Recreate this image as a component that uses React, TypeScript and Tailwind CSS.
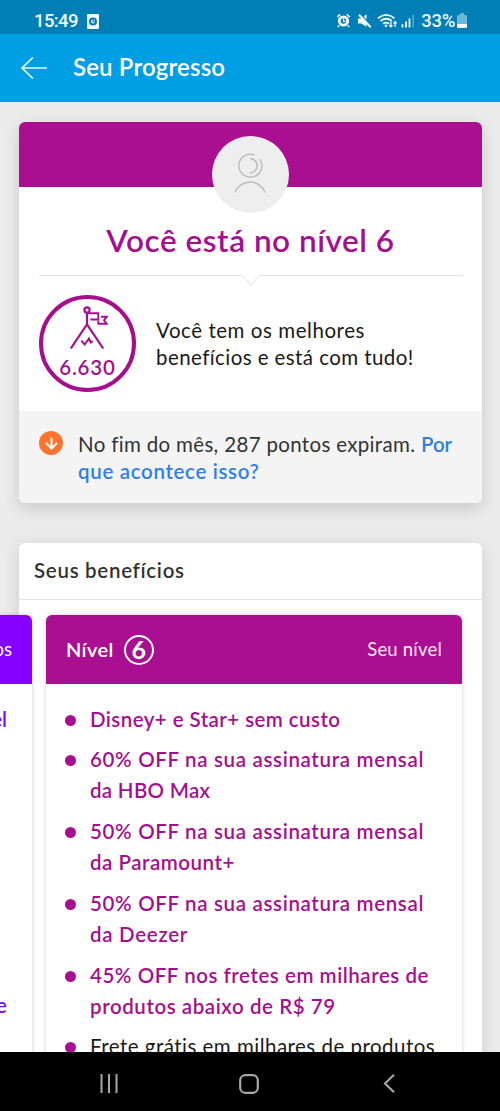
import React from 'react';
import { ArrowDown } from 'lucide-react';

type Benefit = {
    lines: { text: string; tracking: string }[];
    highlight: boolean;
};

const benefits: Benefit[] = [
    { lines: [{ text: 'Disney+ e Star+ sem custo', tracking: 'tracking-[0.43px]' }], highlight: true },
    {
        lines: [
            { text: '60% OFF na sua assinatura mensal', tracking: 'tracking-[0.66px]' },
            { text: 'da HBO Max', tracking: 'tracking-[0.3px]' },
        ],
        highlight: true,
    },
    {
        lines: [
            { text: '50% OFF na sua assinatura mensal', tracking: 'tracking-[0.66px]' },
            { text: 'da Paramount+', tracking: 'tracking-[0.52px]' },
        ],
        highlight: true,
    },
    {
        lines: [
            { text: '50% OFF na sua assinatura mensal', tracking: 'tracking-[0.66px]' },
            { text: 'da Deezer', tracking: 'tracking-[0.7px]' },
        ],
        highlight: true,
    },
    {
        lines: [
            { text: '45% OFF nos fretes em milhares de', tracking: 'tracking-[0.54px]' },
            { text: 'produtos abaixo de R$ 79', tracking: 'tracking-[0.57px]' },
        ],
        highlight: true,
    },
    { lines: [{ text: 'Frete grátis em milhares de produtos', tracking: 'tracking-[0.48px]' }], highlight: false },
];

const StatusBar = () => (
    <div className="h-[34px] shrink-0 bg-[#007fb7] flex items-center justify-between pl-[34px] pr-[33px] pt-2 text-[#f0faff] font-[Roboto,sans-serif]">
        <div className="flex items-center gap-[9px]">
            <span className="text-[18.5px] leading-none font-medium tracking-[-0.6px]">15:49</span>
            <svg width="12" height="15" viewBox="0 0 12 15">
                <rect width="12" height="15" rx="1" fill="currentColor" />
                <circle cx="6" cy="7.5" r="3" fill="none" stroke="#007fb7" strokeWidth="2" />
                <path d="M6 5.5v2.2h1.8" fill="none" stroke="#007fb7" strokeWidth="1.1" />
            </svg>
        </div>
        <div className="flex items-center">
            <svg width="84" height="18" viewBox="0 0 84 18" fill="none" stroke="currentColor">
                {/* alarm */}
                <circle cx="6.5" cy="9" r="4.2" strokeWidth="2.8" />
                <path d="M.2 5 3.200 2.400M12.800 5l-3-2.600M2 13.600.8 15M11 13.600l1.200 1.400" strokeWidth="1.6" />
                <path d="M6.500 6.500V9.400h2.200" strokeWidth="1.2" />
                {/* muted */}
                <path d="M21 6.500h3.300l5.200-4.300v12.600L24.300 11.500H21z" fill="currentColor" stroke="none" />
                <path d="M23.500 2.200 34.800 14.300" stroke="#007fb7" strokeWidth="1.6" />
                <path d="M22 2.800 33.700 15.300" strokeWidth="2" />
                {/* wifi */}
                <path d="M41 6.200q8.200-6.700 16.400 0M43.600 9q5.600-4.500 11.200 0M46.200 11.800q3-2.300 5.800 0" strokeWidth="1.8" />
                <circle cx="49" cy="13.8" r="1.3" fill="currentColor" stroke="none" />
                <path d="M53.900 9.800v5M52.300 13.200l1.600 1.700 1.600-1.700M58.100 15V9.900M56.500 11.500l1.600-1.700 1.600 1.700" strokeWidth="1.3" />
                {/* signal */}
                <path d="M65.500 15.500v-3.200M69 15.500V9.500M72.500 15.500V6.500" strokeWidth="1.8" />
                <path d="M76.200 15.500V3" strokeWidth="1.4" opacity="0.4" />
            </svg>
            <span className="text-[18.5px] leading-none font-medium tracking-[-0.3px]">33%</span>
            <svg width="10" height="16" viewBox="0 0 10 16" className="ml-0.5">
                <path d="M3 0h4v2h1.500q1.500 0 1.500 1.500V11H0V3.500q0-1.500 1.500-1.500H3z" fill="currentColor" opacity="0.45" />
                <path d="M0 11h10v2.500q0 1.500-1.500 1.500h-7Q0 15 0 13.500z" fill="currentColor" />
            </svg>
        </div>
    </div>
);

const Header = () => (
    <header className="h-[68px] shrink-0 bg-[#009ee3] flex items-center pl-[21px] text-white">
        <button aria-label="Voltar">
            <svg width="27" height="22" viewBox="0 0 27 22" fill="none" stroke="#e3f6ff" strokeWidth="1.7">
                <path d="M26 11H1M12 0.500 1 11l11 10.500" />
            </svg>
        </button>
        <h1 className="ml-[25px] -mt-0.5 text-[24px] font-semibold tracking-[0.15px] whitespace-nowrap">Seu Progresso</h1>
    </header>
);

const MountainIcon = () => (
    <svg className="ml-[3px]" width="38" height="44" viewBox="0 0 38 44" fill="none" stroke="#a50f8f" strokeWidth="2.2">
        <circle cx="17" cy="4" r="2.6" />
        <path d="M17 6.600v11.700L.8 42.500M17 18.300l16.200 24.200" />
        <path d="M17 7.300h11.300v6.200h-8M31 10.800h5.700L34 14.300l2.700 3.400h-8.400v-3" strokeWidth="1.9" />
        <path d="M11.300 34.700 14.700 38.500 19 32.500l1.700 4 2-1.500" strokeWidth="2" />
    </svg>
);

const LevelCard = () => (
    <section className="bg-white rounded-md shadow-[0_5px_16px_rgba(0,0,0,0.15)] overflow-hidden">
        <div className="h-[65px] bg-[#a90f90] flex justify-center pt-[14px]">
            <div className="w-[77px] h-[77px] shrink-0 rounded-full bg-[#eeeeee] flex justify-center pt-[17px]">
                <svg className="mr-px" width="32" height="41" viewBox="0 0 32 41" fill="none" stroke="#bdbdbd" strokeWidth="1.5">
                    <path d="M20.500 2A11.500 11.500 0 1 0 26 6.500" />
                    <path d="M16 5.500a7.200 7.200 0 0 1 0 14.400" />
                    <path d="M1 39.500a16 16 0 0 1 30 0" />
                </svg>
            </div>
        </div>
        <h2 className="mt-[33px] h-10 text-center text-[31.5px] leading-10 font-semibold tracking-[0.53px] text-[#a50f8f] whitespace-nowrap">
            Você está no nível 6
        </h2>
        <svg className="block mx-auto mt-[15px]" width="424" height="13" viewBox="0 0 424 13" fill="none" stroke="#e3e3e3">
            <path d="M0 .5h204l8 10 8-10h204" />
        </svg>
        <div className="flex items-center pl-5 mt-[7px] h-[97px]">
            <div className="w-[97px] h-[97px] shrink-0 rounded-full border-4 border-[#a50f8f] flex flex-col items-center pt-[7px]">
                <MountainIcon />
                <span className="mt-[7px] text-[20.5px] leading-[20px] font-semibold tracking-[0.8px] text-[#a50f8f]">6.630</span>
            </div>
            <p className="ml-5 text-[20.5px] leading-[27px] text-[#1a1a1a] whitespace-nowrap">
                <span className="tracking-[0.55px]">Você tem os melhores</span>
                <br />
                <span className="tracking-[0.42px]">benefícios e está com tudo!</span>
            </p>
        </div>
        <div className="mt-[19px] h-[92px] bg-[#f4f4f4] flex pl-5 pt-5">
            <div className="w-6 h-6 shrink-0 rounded-full bg-[#fb7531] flex items-center justify-center text-white">
                <ArrowDown size={17} strokeWidth={2.8} />
            </div>
            <p className="ml-[15px] text-[20.5px] leading-[27px] text-[#333333] whitespace-nowrap">
                <span className="tracking-[0.33px]">No fim do mês, 287 pontos expiram. </span>
                <a href="#" className="font-semibold text-[#307fe8]">Por</a>
                <br />
                <a href="#" className="font-semibold tracking-[0.67px] text-[#307fe8]">que acontece isso?</a>
            </p>
        </div>
    </section>
);

const BenefitsCard = () => (
    <section className="mt-10 h-[560px] bg-white rounded-md shadow-[0_3px_16px_rgba(0,0,0,0.13)]">
        <h3 className="h-[57px] leading-[55px] pl-[15px] border-b border-[#e3e3e3] text-[20.5px] font-semibold text-[#333333]">
            <span className="tracking-[0.7px]">Seus benefícios</span>
        </h3>
        <div className="flex gap-[14px] -ml-[19px] mt-[15px]">
            {/* tail of the previous level */}
            <div className="w-8 h-[480px] shrink-0 bg-white rounded-tr-md shadow-[0_0_4px_rgba(0,0,0,0.2)] text-[#7e0aff]">
                <div className="h-[69px] bg-[#8500ff] rounded-tr-md flex items-center justify-end pr-5 text-[18.5px] text-white">
                    os
                </div>
                <div className="pt-5 pr-[25px] flex flex-col items-end text-[20.5px] leading-[31px] font-semibold">
                    <span>el</span>
                    <span className="mt-[255px]">e</span>
                </div>
            </div>
            <div className="w-[416px] h-[480px] shrink-0 bg-white rounded-t-md shadow-[0_0_4px_rgba(0,0,0,0.2)]">
                <div className="h-[69px] bg-[#a90f90] rounded-t-md flex items-center px-5 text-white">
                    <span className="-mt-0.5 text-[20px] font-semibold tracking-[0.4px]">Nível</span>
                    <span className="ml-[10px] w-[30px] h-[30px] rounded-full border-2 border-white flex items-center justify-center text-[25px] leading-none font-bold">
                        <span className="-mt-px">6</span>
                    </span>
                    <span className="ml-auto text-[18.5px] tracking-[0.2px] text-[#fbe9f8]">Seu nível</span>
                </div>
                <ul className="pt-[19.6px] pl-[19px] flex flex-col gap-[9.75px]">
                    {benefits.map((benefit, i) => (
                        <li key={i} className="flex text-[20.5px] leading-[31px]">
                            <span className="mt-[11px] w-[11px] h-[11px] shrink-0 rounded-full bg-[#a90f90]" />
                            <div
                                className={
                                    benefit.highlight
                                        ? 'ml-[14px] font-semibold text-[#a50f8f] whitespace-nowrap'
                                        : 'ml-[14px] text-[#1a1a1a] whitespace-nowrap'
                                }
                            >
                                {benefit.lines.map((line) => (
                                    <p key={line.text}>
                                        <span className={line.tracking}>{line.text}</span>
                                    </p>
                                ))}
                            </div>
                        </li>
                    ))}
                </ul>
            </div>
        </div>
    </section>
);

const NavBar = () => (
    <nav className="h-[59px] shrink-0 bg-black text-[#a8a8a8] flex items-center pl-[100px] pt-1">
        <svg width="18" height="19" viewBox="0 0 18 19" stroke="currentColor" strokeWidth="2">
            <path d="M1.500 0v19M9 0v19M16.500 0v19" />
        </svg>
        <svg className="ml-[121px]" width="20" height="20" viewBox="0 0 20 20" fill="none" stroke="currentColor" strokeWidth="2.2">
            <rect x="1.2" y="1.2" width="17.6" height="17.6" rx="5" />
        </svg>
        <svg className="ml-[124px]" width="12" height="19" viewBox="0 0 12 19" fill="none" stroke="currentColor" strokeWidth="2.1">
            <path d="M11 .8 2 9.500l9 8.700" />
        </svg>
    </nav>
);

const App = () => {
    return (
        <div className="w-[500px] h-[1111px] overflow-hidden flex flex-col bg-[#ebebeb] font-[Lato,sans-serif]">
            <StatusBar />
            <Header />
            <main className="h-[950px] overflow-hidden pt-5 pl-[19px] pr-[18px]">
                <LevelCard />
                <BenefitsCard />
            </main>
            <NavBar />
        </div>
    );
};

export default App;
